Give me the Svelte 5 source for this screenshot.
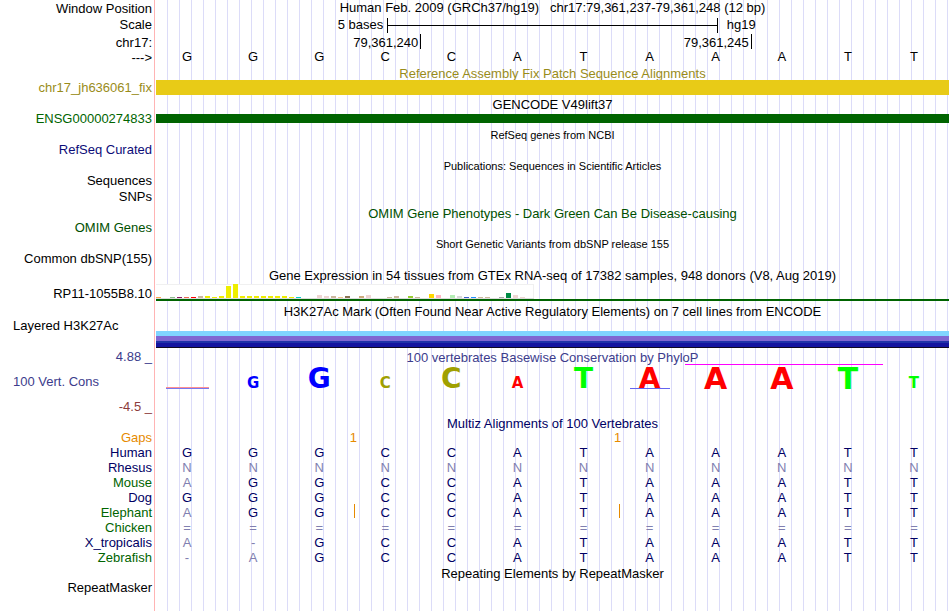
<script>
    const bases = ['G', 'G', 'G', 'C', 'C', 'A', 'T', 'A', 'A', 'A', 'T', 'T']

    const species = [
        { name: 'Human', color: 'navy', seq: 'GGGCCATAAATT' },
        { name: 'Rhesus', color: 'navy', seq: 'NNNNNNNNNNNN' },
        { name: 'Mouse', color: 'green', seq: 'AGGCCATAAATT' },
        { name: 'Dog', color: 'navy', seq: 'GGGCCATAAATT' },
        { name: 'Elephant', color: 'green', seq: 'AGGCCATAAATT', inserts: [3, 7] },
        { name: 'Chicken', color: 'green', seq: '============' },
        { name: 'X_tropicalis', color: 'navy', seq: 'A-GCCATAAATT' },
        { name: 'Zebrafish', color: 'green', seq: '-AGCCATAAATT' }
    ]

    // conservation logo, one entry per base
    const logo = [
        { flat: true },
        { base: 'G', size: 'small' },
        { base: 'G', size: 'medium' },
        { base: 'C', size: 'small' },
        { base: 'C', size: 'medium' },
        { base: 'A', size: 'small' },
        { base: 'T', size: 'medium' },
        { base: 'A', size: 'medium', underline: true },
        { base: 'A', size: 'large', clipped: true },
        { base: 'A', size: 'large', clipped: true },
        { base: 'T', size: 'large', clipped: true },
        { base: 'T', size: 'small' }
    ]

    // GTEx tissues: [height, color]
    const none = [0, 'transparent']
    const yellow = '#eeee00'
    const tissues = [
        [1, '#ffa54f'], none, [1, '#8fbc8f'], [1, '#8b1c62'], [1, '#ee6a50'], [1, '#ff0000'],
        [2, '#cdb79e'], [2, yellow], [1, yellow], [2, yellow], [12, yellow], [14, yellow],
        [2, yellow], [2, yellow], [2, yellow], [2, yellow], [2, yellow], [2, yellow],
        [2, yellow], [1, yellow], [1, '#00cdcd'], none, none, [3, '#eed5d2'],
        [2, '#eed5d2'], [2, '#cdb79e'], [1, '#eec591'], [2, '#8b7355'], none, [2, '#cdaa7d'],
        [3, '#eed5d2'], none, none, [1, '#cdb79e'], [2, '#cdb79e'], none,
        [2, '#9acd32'], [1, '#cdb79e'], none, [4, '#ffd700'], [3, '#ffb6c1'], none,
        [3, '#b4eeb4'], [2, '#d9d9d9'], [1, '#3a5fcd'], [1, '#1e90ff'], [1, '#cdb79e'], [1, '#cdb79e'],
        none, [1, '#a6a6a6'], [5, '#008b45'], [3, '#eed5d2'], [1, '#eed5d2'], none
    ]

    function isFaint(species, i) {
        const c = species.seq[i]
        return c !== bases[i]
    }
</script>

<main class="browser">
    <div class="row window">
        <div class="label">Window Position</div>
        <div class="title">Human Feb. 2009 (GRCh37/hg19)&nbsp;&nbsp; chr17:79,361,237-79,361,248 (12 bp)</div>
    </div>
    <div class="row scale">
        <div class="label">Scale</div>
        <div class="scale-bar">
            <span class="scale-text">5 bases</span>
            <span class="ruler"><span class="ruler-line"></span></span>
            <span class="assembly">hg19</span>
        </div>
    </div>
    <div class="row tall chrom">
        <div class="label">chr17:</div>
        <div class="positions">
            <span>79,361,240</span>
            <span>79,361,245</span>
            <span></span>
        </div>
    </div>
    <div class="row">
        <div class="label">---&gt;</div>
        <div class="bases">
            {#each bases as base}
                <span>{base}</span>
            {/each}
        </div>
    </div>

    <div class="row olive">
        <div class="title">Reference Assembly Fix Patch Sequence Alignments</div>
    </div>
    <div class="row tall olive">
        <div class="label">chr17_jh636061_fix</div>
        <div class="patch"></div>
    </div>

    <div class="row">
        <div class="title">GENCODE V49lift37</div>
    </div>
    <div class="row tall gene">
        <div class="label">ENSG00000274833</div>
        <div class="gencode"></div>
    </div>

    <div class="row">
        <div class="title small">RefSeq genes from NCBI</div>
    </div>
    <div class="row tall blue">
        <div class="label">RefSeq Curated</div>
    </div>

    <div class="row">
        <div class="title small">Publications: Sequences in Scientific Articles</div>
    </div>
    <div class="row tall">
        <div class="label">Sequences</div>
    </div>
    <div class="row tall">
        <div class="label">SNPs</div>
    </div>

    <div class="row omim">
        <div class="title">OMIM Gene Phenotypes - Dark Green Can Be Disease-causing</div>
    </div>
    <div class="row tall omim">
        <div class="label">OMIM Genes</div>
    </div>

    <div class="row">
        <div class="title small">Short Genetic Variants from dbSNP release 155</div>
    </div>
    <div class="row tall">
        <div class="label">Common dbSNP(155)</div>
    </div>

    <div class="row tall">
        <div class="title">Gene Expression in 54 tissues from GTEx RNA-seq of 17382 samples, 948 donors (V8, Aug 2019)</div>
    </div>
    <div class="row gtex">
        <div class="label">RP11-1055B8.10</div>
        <div class="expression">
            <div class="tissues">
                {#each tissues as [height, color]}
                    <span class="tissue" style="height:{height}px; background-color:{color}"></span>
                {/each}
            </div>
        </div>
    </div>

    <div class="row tall">
        <div class="title">H3K27Ac Mark (Often Found Near Active Regulatory Elements) on 7 cell lines from ENCODE</div>
    </div>
    <div class="row histone">
        <div class="label left">Layered H3K27Ac</div>
        <div class="layers">
            <div class="layer sky"></div>
            <div class="layer violet"></div>
            <div class="layer indigo"></div>
            <div class="layer deep"></div>
            <div class="layer black"></div>
        </div>
    </div>

    <div class="row slate">
        <div class="label">4.88 _</div>
        <div class="title">100 vertebrates Basewise Conservation by PhyloP</div>
    </div>
    <div class="row conservation">
        <div class="cons-labels">
            <div class="label left slate">100 Vert. Cons</div>
            <div class="label maroon">-4.5 _</div>
        </div>
        <div class="logo">
            {#each logo as item}
                <div class="logo-cell" class:clipped={item.clipped}>
                    {#if item.flat}
                        <span class="flat"></span>
                    {:else}
                        <span class="logo-base {item.base} {item.size}">{item.base}</span>
                    {/if}
                    {#if item.underline}
                        <span class="residue"></span>
                    {/if}
                </div>
            {/each}
        </div>
    </div>

    <div class="row navy">
        <div class="title">Multiz Alignments of 100 Vertebrates</div>
    </div>
    <div class="row orange">
        <div class="label">Gaps</div>
        <div class="gaps">
            <span>1</span>
            <span>1</span>
        </div>
    </div>
    <table class="alignment">
        <tbody>
            {#each species as s}
                <tr>
                    <th scope="row" class={s.color}>{s.name}</th>
                    {#each s.seq as c, i}
                        <td class:faint={isFaint(s, i)} class:insert={s.inserts?.includes(i)}>{c}</td>
                    {/each}
                </tr>
            {/each}
        </tbody>
    </table>

    <div class="row">
        <div class="title">Repeating Elements by RepeatMasker</div>
    </div>
    <div class="row">
        <div class="label">RepeatMasker</div>
    </div>
</main>

<style>
    :global(body) {
        margin: 0;
        background: white;
    }

    .browser {
        box-sizing: border-box;
        min-height: 100vh;
        padding-right: 1px;
        font-family: "Liberation Sans", Arial, Helvetica, sans-serif;
        font-size: 13px;
        line-height: 15px;
        color: black;
        /* left border line and the vertical guide lines */
        background-image:
            linear-gradient(#ffb4b4, #ffb4b4),
            repeating-linear-gradient(to right, transparent 0 11px, #dcdcf8 11px 12px);
        background-position: 154px 0, 156px 0;
        background-size: 1px 100%, 100% 100%;
        background-repeat: no-repeat;
    }

    .row {
        display: grid;
        grid-template-columns: 156px 1fr;
        height: 15px;
    }

    .label {
        grid-column: 1;
        padding-right: 4px;
        text-align: right;
        white-space: nowrap;
    }
    .label.left {
        padding-left: 13px;
        text-align: left;
    }
    .title {
        grid-column: 2;
        line-height: 17px;
        text-align: center;
        white-space: nowrap;
    }
    .small {
        font-size: 11px;
    }

    .tall {
        height: 16px;
        line-height: 16px;
    }
    .tall .title {
        line-height: 18px;
    }
    .chrom {
        line-height: 17px;
    }
    .window {
        height: 16px;
    }
    .window .label {
        line-height: 17px;
    }
    .window .title {
        line-height: 15px;
    }
    .scale {
        height: 18px;
        line-height: 18px;
    }

    .olive { color: #998c1a; }
    .gene { color: #006400; }
    .blue { color: #0c0c78; }
    .omim { color: #005000; }
    .slate { color: #3c3c8c; }
    .maroon { color: #8c3c3c; }
    .navy { color: #000064; }
    .green { color: #006400; }
    .orange { color: #e68a00; }

    .scale-bar {
        display: grid;
        grid-template-columns: 7fr 10fr 7fr;
        align-items: center;
    }
    .scale-text {
        padding-right: 4px;
        text-align: right;
    }
    .ruler {
        display: flex;
        align-items: center;
        height: 15px;
        border-left: 1px solid black;
        border-right: 1px solid black;
    }
    .ruler-line {
        flex: 1;
        height: 1px;
        background: black;
    }
    .assembly {
        padding-left: 9px;
    }

    .positions {
        display: grid;
        grid-template-columns: 4fr 5fr 3fr;
        height: 15px;
    }
    .positions span {
        height: 15px;
        padding-right: 2px;
        text-align: right;
    }
    .positions span + span {
        border-left: 1px solid black;
    }

    .bases,
    .logo {
        display: grid;
        grid-template-columns: repeat(12, 1fr);
    }
    .bases {
        line-height: 13px;
    }
    .bases span {
        padding-right: 4px;
        text-align: center;
    }

    .patch {
        height: 15px;
        background: #e8cb17;
    }
    .gencode {
        height: 9px;
        margin-top: 3px;
        background: #006400;
    }

    .gtex {
        height: 20px;
        line-height: 22px;
    }
    .expression {
        height: 15px;
        margin-top: 1px;
        border-bottom: 2px solid #006400;
    }
    .tissues {
        box-sizing: border-box;
        display: flex;
        align-items: flex-end;
        gap: 2px;
        width: 378px;
        height: 15px;
        background: white;
        border-bottom: 1px solid #dcdcdc;
        box-shadow: inset 0 1px #f0f0f0, inset -1px 0 #f0f0f0;
    }
    .tissue {
        width: 5px;
    }

    .histone {
        height: 30px;
        line-height: 14px;
    }
    .layers {
        margin-top: 12px;
    }
    .sky {
        height: 5px;
        background: #80d4ff;
    }
    .violet {
        height: 5px;
        background: #8066d2;
    }
    .indigo {
        height: 2px;
        background: #2032a8;
    }
    .deep {
        height: 4px;
        background: #1414a0;
    }
    .black {
        height: 1px;
        background: #100820;
    }

    .conservation {
        height: 51px;
    }
    .cons-labels {
        display: flex;
        flex-direction: column;
        justify-content: space-between;
        padding-top: 10px;
        padding-bottom: 1px;
    }
    .logo-cell {
        position: relative;
        display: flex;
        justify-content: center;
        align-items: flex-end;
        box-sizing: border-box;
        height: 25px;
        padding-right: 4px;
    }
    .clipped {
        border-top: 1px solid #ff00ff;
    }
    .logo-base {
        font-family: "DejaVu Sans", sans-serif;
        font-weight: bold;
    }
    .logo-base.small {
        font-size: 15px;
        line-height: 11px;
    }
    .logo-base.medium {
        font-size: 28px;
        line-height: 20px;
    }
    .logo-base.large {
        font-size: 30px;
        line-height: 21px;
    }
    .G { color: #0000ff; }
    .C { color: #a0a000; }
    .A { color: #ff0000; }
    .T { color: #00ff00; }
    .flat {
        width: 43px;
        height: 1px;
        background: #ff9090;
        border-bottom: 1px solid #7878f0;
    }
    .residue {
        position: absolute;
        bottom: 0;
        width: 40px;
        height: 1px;
        background: #6464f0;
    }

    .gaps {
        display: grid;
        grid-template-columns: 5fr 2fr 6fr 2fr 9fr;
        text-align: center;
    }
    .gaps span {
        grid-column: 2;
        padding-right: 2px;
    }
    .gaps span + span {
        grid-column: 4;
    }

    .alignment {
        width: 100%;
        table-layout: fixed;
        border-collapse: collapse;
        color: #000064;
    }
    .alignment th {
        width: 152px;
        padding: 0 4px 0 0;
        font-weight: normal;
        text-align: right;
    }
    .alignment td {
        position: relative;
        padding: 0 4px 0 0;
        text-align: center;
    }
    .alignment .faint {
        color: #8080b0;
    }
    .insert::before {
        content: "";
        position: absolute;
        top: -1px;
        left: 0;
        width: 1px;
        height: 14px;
        background: #e68a00;
    }
</style>
